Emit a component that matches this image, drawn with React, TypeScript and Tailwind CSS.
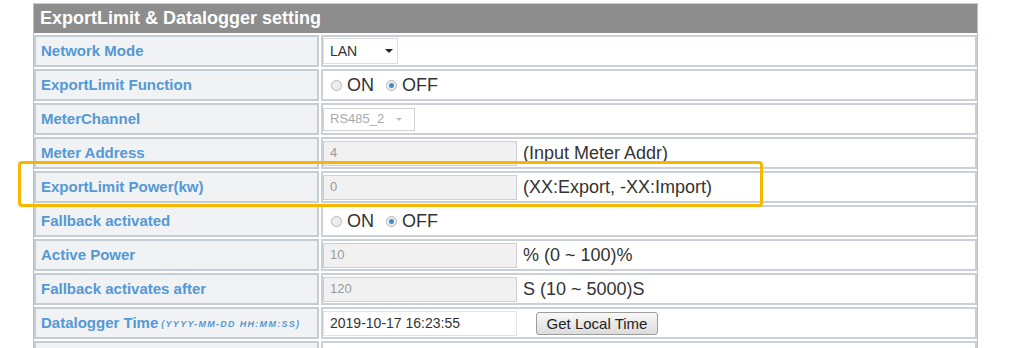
import React from "react"

const font = { fontFamily: '"Liberation Sans", Arial, sans-serif' }

function Radio({ checked }: { checked?: boolean }) {
  return (
    <span className="inline-flex items-center justify-center w-[11px] h-[11px] rounded-full border border-[#b5b5b5] bg-[#eeeeee] mr-[5px]">
      {checked && <span className="w-[5px] h-[5px] rounded-full bg-[#3d8fd0]" />}
    </span>
  )
}

function OnOff() {
  return (
    <div className="flex items-center text-[18px] text-[#333] pl-[8px]">
      <Radio />
      <span className="mr-[12px]">ON</span>
      <Radio checked />
      <span>OFF</span>
    </div>
  )
}

function Field({ value, note }: { value: string; note: string }) {
  return (
    <div className="flex items-center">
      <div className="w-[194px] h-[25px] border border-[#cfcfcf] bg-[#f1f1f1] text-[13px] text-[#9a9a9a] flex items-center pl-[6px]">
        {value}
      </div>
      <span className="ml-[6px] text-[18px] text-[#333]">{note}</span>
    </div>
  )
}

const rows: { label: React.ReactNode; value: React.ReactNode }[] = [
  {
    label: "Network Mode",
    value: (
      <div className="w-[75px] h-[26px] border border-[#dedede] bg-white flex items-center pl-[6px] text-[14px] text-[#333]">
        LAN
        <span className="ml-[28px] w-0 h-0 border-l-[4px] border-r-[4px] border-t-[4px] border-l-transparent border-r-transparent border-t-[#222]" />
      </div>
    ),
  },
  { label: "ExportLimit Function", value: <OnOff /> },
  {
    label: "MeterChannel",
    value: (
      <div className="w-[92px] h-[23px] border border-[#d2d2d2] bg-white flex items-center pl-[6px] text-[13px] text-[#aaa]">
        RS485_2
        <span className="ml-[12px] w-0 h-0 border-l-[3px] border-r-[3px] border-t-[3px] border-l-transparent border-r-transparent border-t-[#bbb]" />
      </div>
    ),
  },
  { label: "Meter Address", value: <Field value="4" note="(Input Meter Addr)" /> },
  { label: "ExportLimit Power(kw)", value: <Field value="0" note="(XX:Export, -XX:Import)" /> },
  { label: "Fallback activated", value: <OnOff /> },
  { label: "Active Power", value: <Field value="10" note="% (0 ~ 100)%" /> },
  { label: "Fallback activates after", value: <Field value="120" note="S (10 ~ 5000)S" /> },
  {
    label: (
      <>
        Datalogger Time
        <span className="text-[9px] italic tracking-[1.3px] pt-[3px] ml-[3px]">(YYYY-MM-DD HH:MM:SS)</span>
      </>
    ),
    value: (
      <div className="flex items-center">
        <div className="w-[194px] h-[25px] border border-[#e2e2e2] bg-white text-[14px] text-[#333] flex items-center pl-[6px]">
          2019-10-17 16:23:55
        </div>
        <button className="ml-[19px] w-[122px] h-[23px] border border-[#9c9c9c] rounded-[3px] bg-gradient-to-b from-[#f8f8f8] to-[#dcdcdc] text-[15px] text-[#222]">
          Get Local Time
        </button>
      </div>
    ),
  },
  { label: "", value: null },
]

export default function App() {
  return (
    <div className="relative w-[1024px] h-[348px] bg-white overflow-hidden" style={font}>
      <div className="ml-[33px] mt-[3px] w-[945px] border-x border-[#b7c0c9]">
        <div className="h-[30px] bg-[#8d8d8d] text-white font-bold text-[18px] flex items-center pl-[6px] border-t border-[#c9d0d6]">
          ExportLimit &amp; Datalogger setting
        </div>
        <div className="flex flex-col gap-[2px] pt-[2px]">
          {rows.map((r, i) => (
            <div key={i} className="grid grid-cols-[285px_1fr] gap-[2px] h-[32px]">
              <div className="border-2 border-[#c4ccd4] bg-[#f1f2f3] flex items-center pl-[5px] text-[15px] font-bold text-[#5399d5]">
                {r.label}
              </div>
              <div className="border-2 border-[#c9d0d7] bg-white flex items-center">{r.value}</div>
            </div>
          ))}
        </div>
      </div>
      <div className="absolute left-[18px] top-[161px] w-[745px] h-[46px] border-[3px] border-[#f8b600] rounded-[4px]" />
    </div>
  )
}
